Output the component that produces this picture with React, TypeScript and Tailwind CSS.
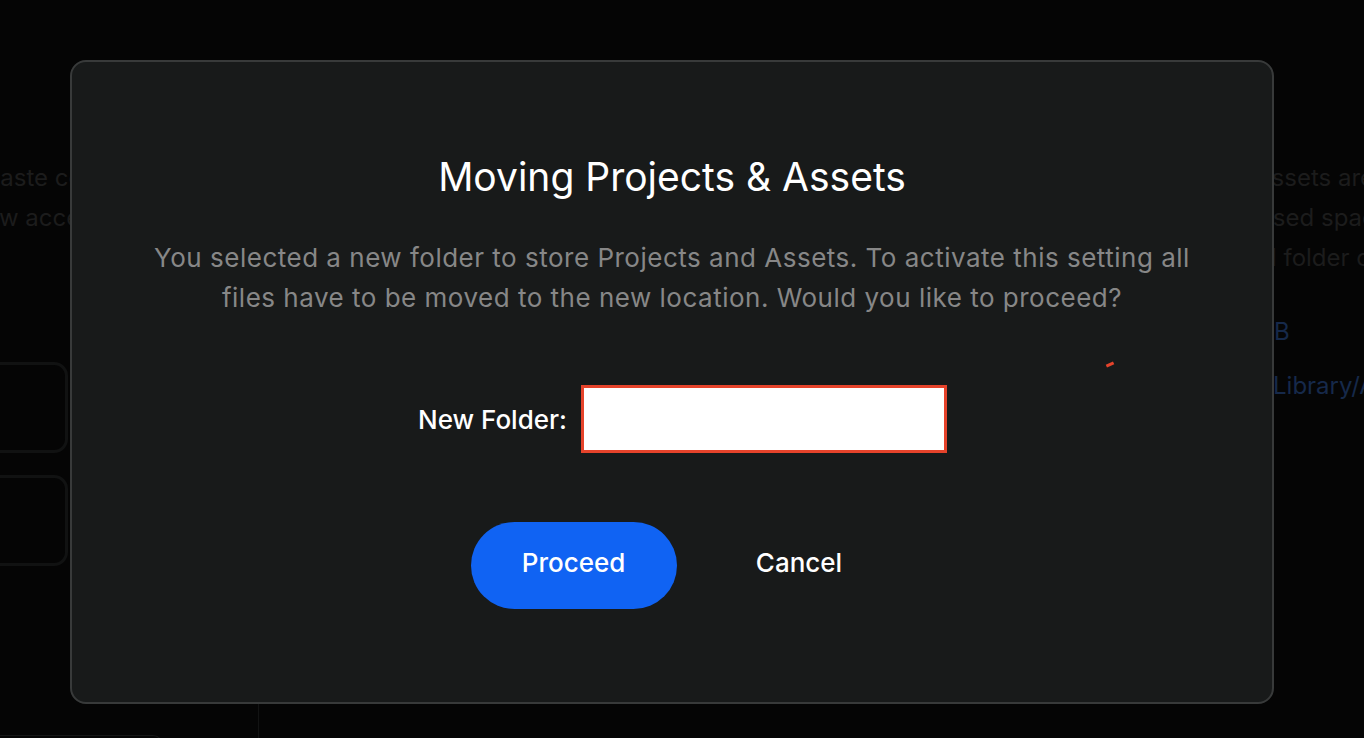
export default function App() {
  return (
    <div className="relative h-[738px] w-full overflow-hidden bg-[#050505] font-['Inter',sans-serif]">
      {/* page behind the dialog */}
      <div className="flex h-full">
        <div className="-ml-[15px] flex w-[1270px] shrink-0 flex-col">
          <div className="whitespace-nowrap pt-[158px] text-[24px] leading-[40px] text-[#1c1c1c]">
            <p>Paste content from another location</p>
            <p>ow access to the selected folder</p>
          </div>
          <div className="-ml-[135px] mt-[124px] h-[91px] w-[218px] rounded-[14px] border-[3px] border-[#111212]" />
          <div className="-ml-[135px] mt-[22px] h-[91px] w-[218px] rounded-[14px] border-[3px] border-[#111212]" />
          <div className="flex-1" />
          <div className="flex h-[35px]">
            <div className="w-[274px] border-r border-[#121313] pt-[32px]">
              <div className="h-[10px] w-[178px] rounded-tr-[12px] border-r border-t border-[#161717]" />
            </div>
          </div>
        </div>
        <div className="flex flex-col whitespace-nowrap pt-[158px] text-[24px] leading-[40px]">
          <p className="text-[#1c1c1c]">Assets are stored</p>
          <p className="text-[#1c1c1c]">Used space on disk</p>
          <p className="pl-[7px] text-[#1c1c1c]">d folder contains</p>
          <p className="mt-[34px] pl-[1px] text-[#16294a]">GB</p>
          <p className="mt-[14px] pl-[18px] text-[#16294a]">Library/Application</p>
        </div>
      </div>

      {/* dialog */}
      <div className="absolute inset-0 pl-[70px] pt-[60px]">
        <div className="relative flex h-[644px] w-[1204px] flex-col items-center rounded-[16px] border-2 border-[#383a3a] bg-[#181a1a] pt-[91px]">
          <h1 className="text-[39px] leading-[48px] text-white">Moving Projects &amp; Assets</h1>
          <p className="mt-[37px] text-center text-[26px] leading-[40px] tracking-[0.5px] text-[#878787]">
            You selected a new folder to store Projects and Assets. To activate this setting all
            <br />
            files have to be moved to the new location. Would you like to proceed?
          </p>
          <div className="ml-[21px] mt-[67px] flex items-center gap-[14px]">
            <label className="text-[26px] font-medium text-white">New Folder:</label>
            <input className="h-[68px] w-[366px] border-[3px] border-[#e5432b] bg-white outline-none" />
          </div>
          <div className="mt-[69px] flex items-center gap-[48px]">
            <button className="h-[87px] w-[206px] rounded-full bg-[#1063f3] pb-[6px] text-[26px] font-medium text-white">
              Proceed
            </button>
            <button className="w-[149px] pb-[6px] text-[26px] font-medium text-white">Cancel</button>
          </div>
          <div className="absolute left-[1034px] top-[301px] h-[3px] w-[8px] -rotate-[25deg] bg-[#e5432b]" />
        </div>
      </div>
    </div>
  );
}
